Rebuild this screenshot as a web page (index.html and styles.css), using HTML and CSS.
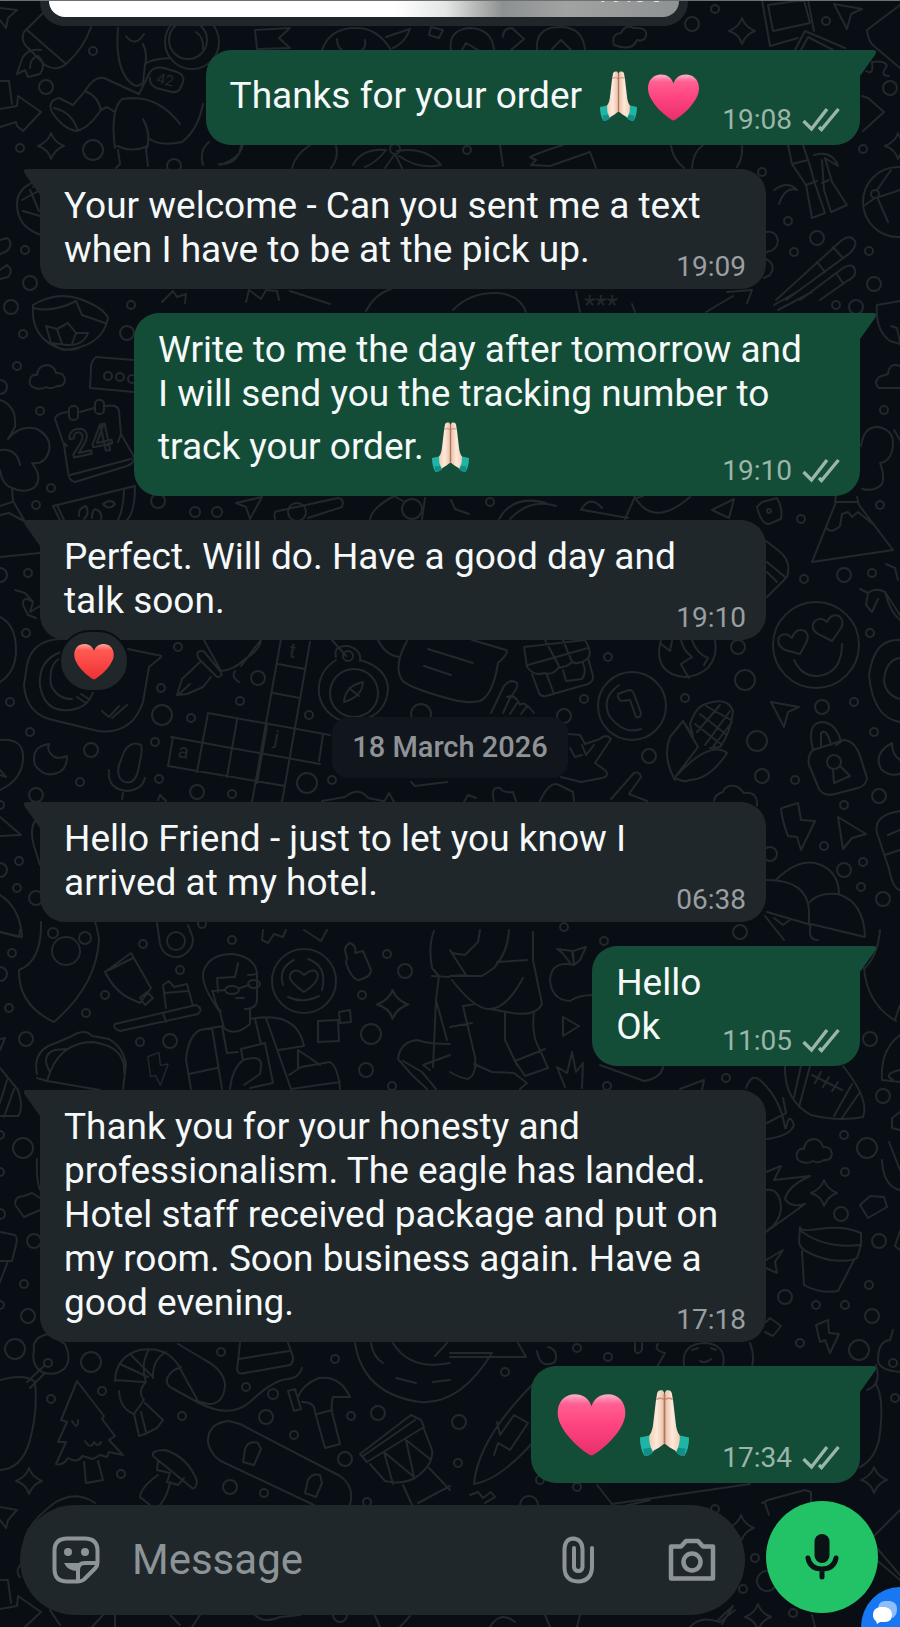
FILE: index.html
```html
<!DOCTYPE html>
<html lang="en">
<head>
    <meta charset="UTF-8">
    <meta name="viewport" content="width=device-width, initial-scale=1.0">
    <title>Chat</title>
    <link rel="stylesheet" href="styles.css">
</head>
<body>

    <!-- shared symbols -->
    <svg class="defs" width="0" height="0" aria-hidden="true">
        <defs>
            <linearGradient id="pink" x1="0" y1="0" x2="0" y2="1">
                <stop offset="0" stop-color="#ffb3c8"/>
                <stop offset="0.16" stop-color="#ff5f92"/>
                <stop offset="0.5" stop-color="#ff4480"/>
                <stop offset="1" stop-color="#e62f6c"/>
            </linearGradient>
            <linearGradient id="red" x1="0" y1="0" x2="0" y2="1">
                <stop offset="0" stop-color="#ffa299"/>
                <stop offset="0.18" stop-color="#ff5a52"/>
                <stop offset="1" stop-color="#f02f34"/>
            </linearGradient>
            <linearGradient id="skin" x1="0" y1="0" x2="1" y2="0">
                <stop offset="0" stop-color="#f3cdb4"/>
                <stop offset="0.5" stop-color="#fdeada"/>
                <stop offset="1" stop-color="#e9bda3"/>
            </linearGradient>
            <symbol id="heart" viewBox="0 0 55 62">
                <path d="M27.5 55C25 55 2 38 2 23C2 14 8 9 15 9C21 9 25.500 12 27.500 18C29.500 12 34 9 40 9C47 9 53 14 53 23C53 38 30 55 27.500 55Z"/>
            </symbol>
            <symbol id="hands" viewBox="0 0 55 62">
                <g id="hand">
                    <path fill="#1fb5a6" d="M16 40L9 41.500Q9 50 12.500 55.500Q16 56 19.500 52Z"/>
                    <path fill="#138f86" d="M11.500 50L12.500 55.500Q16 56 19.500 52L18 49Z"/>
                    <path fill="url(#skin)" d="M22 8Q22.500 6 24.500 6H26Q27.500 7 27.500 10V46Q26 47 23.500 49L18.500 52Q15.500 46 16 40Q18.500 37 19 31L21 14Z"/>
                    <path fill="none" stroke="#c98f78" stroke-width="1" d="M21.500 13Q24 11 27 13"/>
                </g>
                <use href="#hand" transform="matrix(-1 0 0 1 55 0)"/>
                <path fill="none" stroke="#b07660" stroke-width="1.300" d="M27.500 9V46"/>
            </symbol>
            <symbol id="ticks" viewBox="0 0 38 26">
                <path fill="none" stroke="currentColor" stroke-width="3.400" d="M1.500 14L9.500 22L25 2M17 20L19.500 22.500L36.500 2"/>
            </symbol>
        </defs>
    </svg>

    <!-- wallpaper -->
    <svg class="wallpaper" viewBox="0 0 900 1627" preserveAspectRatio="xMidYMid slice" aria-hidden="true">
        <defs>
            <path id="star" d="M0-13Q3-4 13 0Q4 3 0 13Q-3 3-13 0Q-3-4 0-13Z"/>
            <path id="bolt" d="M-13-20L3-26L5-8L16-10L5 20L-2 6L-9 8Z"/>
            <path id="plane" d="M-14-11L14-6L3-1L-1 14Z"/>
            <path id="cloud" d="M-12 11Q-19 9-17 2Q-15-3-10-2Q-9-11-1-12Q7-12 9-4Q17-5 18 3Q17 10 10 9Q4 13-1 10Q-6 13-12 11Z"/>
        </defs>

        <!-- rocket man, top left -->
        <path d="M0 8L17 10L8 18L6 28L0 20M43 13L24 32Q20 41 28 48L45 65Q56 72 66 64Q84 48 91 27M27 30L66 64M41 50Q25 48 21 62L17 74L25 70L28 77L40 74Q47 64 38 56Q30 58 30 68"/>
        <path d="M118 28Q115 63 127 79Q136 90 143 83L145 64Q151 59 170 58M143 44Q148 55 145 66M126 36Q135 48 144 34M85 91Q94 76 104 78L139 94L150 72Q155 66 164 68L177 72Q185 75 183 82L180 89Q177 94 168 91L156 88Q149 84 150 78M73 105Q82 95 85 91Q98 96 101 110M73 105L59 98Q47 101 52 112Q63 129 76 131Q88 129 101 110L107 107L115 112M54 108Q72 112 78 131M115 148Q110 110 122 99L133 98Q160 98 180 124M143 119Q152 135 146 150L148 166M117 146Q132 153 148 146M118 150L120 164L116 168M148 138Q160 147 182 142Q198 130 203 104"/>
        <circle cx="188" cy="40" r="19"/><circle cx="192" cy="42" r="27"/><path d="M196 32Q204 37 203 49"/>
        <text x="156" y="83" font-size="15" transform="rotate(12 156 83)">42</text>
        <path d="M0 81H9L12 104M0 109L17 106L18 96L41 112L23 131L17 126L16 122L0 127M255 30L290 28L279 38L290 48L257 49ZM322 50Q330 28 355 28Q377 27 391 50M337 39Q337 47 342 50M365 40Q366 47 362 50M386 37L410 29Q405 43 393 48M431 27L443 30L439 38L429 35Z"/>
        <path d="M451 50Q448 31 468 28Q492 28 494 50M462 50L466 43L478 50M503 37Q503 28 512 28L524 39L511 50M537 50Q535 27 560 27Q583 27 585 50M552 49L561 40L571 50M614 45Q611 34 621 33Q625 24 634 28Q648 27 646 36Q644 42 637 40Q632 52 614 45M762 0L770 46L798 38M808 0L814 31M768 5L804 0L810 23L773 31ZM795 50L805 31L845 48M801 50L808 37L833 50M867 30L900 5M867 30Q868 42 875 47L900 68M866 71Q874 76 872 62Q885 60 887 66Q879 76 889 76"/>
        <path d="M862 96L868 98L884 112L863 131M788 145L792 164L806 185L812 218L825 213L814 181L810 166L803 145M792 164L808 160M806 185L817 181M814 155Q832 150 838 166L825 158L832 182L847 205L831 212L824 190L822 160M774 190Q788 180 797 190Q785 186 779 204M822 183L829 180"/>
        <circle cx="898" cy="202" r="35"/><circle cx="875" cy="194" r="4"/><path d="M877 190L891 170M879 197L900 190M878 199L888 222M865 205L875 198"/>
        <path d="M53 177Q17 182 17 204Q17 227 41 235M30 190L39 211M22 200L40 190M23 211L40 216M33 187L40 183M203 165Q199 150 209 142M220 165Q243 157 243 142M241 145Q239 165 219 164M292 168Q295 155 310 145M336 146Q339 158 331 168M353 165Q362 148 386 150Q376 163 365 167M397 151Q425 146 441 165Q419 170 399 156M395 154L385 168M395 154L402 168M503 166L500 145M530 157Q543 151 563 145M530 157L536 160L531 165L550 166L590 152L596 168M671 146Q673 159 684 168M692 168Q693 152 703 145M742 146Q743 158 737 167"/>
        <circle cx="395" cy="149" r="5"/>
        <!-- chopsticks and the rest on the right -->
        <path d="M776 300L842 240Q850 234 855 241Q857 246 850 253L786 300M800 300L843 268Q853 262 855 270Q857 276 847 281L820 300M817 262L825 272M833 247L842 257M836 273L843 283M766 232Q776 230 778 241Q777 251 766 252M766 259Q777 265 770 275L764 278M727 292L752 290L747 303M0 240L7 238Q14 243 7 251L0 254M0 270L7 265Q14 270 8 277L0 279M162 302L173 291L177 297L186 294L185 303M246 302L249 290L261 299L266 290L277 291L279 300M290 291L330 304M366 311Q375 294 391 289M453 310Q470 292 498 293Q520 295 526 312M576 292L580 312M632 304L635 312M706 312L733 296M774 305L800 290M778 310L812 292"/>
        <text x="584" y="314" font-size="26">***</text>

        <!-- bowl, cloud, calendar -->
        <path d="M33 305Q30 340 64 350Q98 347 106 325L108 318Q104 308 80 299Q57 291 33 305ZM33 308Q53 313 76 301L82 315L105 323M46 326L57 329L68 323L76 333L88 333Q83 346 67 345L51 343ZM57 329L62 344M76 333L72 344M53 344Q64 353 79 348M134 360L96 357Q90 362 91 370L90 388L134 392"/>
        <circle cx="108" cy="376" r="4"/><circle cx="120" cy="377" r="4"/><circle cx="132" cy="379" r="4"/>
        <use href="#cloud" x="47" y="377"/>
        <path d="M55 419Q55 414 67 412M80 412L94 408M106 406Q118 404 119 411L121 434L133 455Q136 463 127 466L75 482Q69 481 68 472L64 445L55 419M64 443L67 446M121 434L118 442M70 475L131 459"/>
        <rect x="69" y="406" width="9" height="14" rx="4"/><rect x="95" y="400" width="9" height="14" rx="4"/>
        <text class="outline" x="72" y="458" font-size="38" transform="rotate(-12 72 458)">24</text>
        <path d="M0 400Q17 406 15 427L8 439Q20 424 37 429Q52 437 49 451Q45 465 32 463Q43 477 35 487Q25 494 12 488Q2 485 0 470M0 450Q17 448 20 465M12 488L13 501L24 520M0 506L12 502M0 515L9 513L24 521L36 534M0 557L40 553M53 506L135 486Q135 512 127 520M53 506L60 520M57 505L64 520M124 490Q124 507 118 520"/>
        <path d="M79 516Q78 508 86 506Q90 514 84 519M92 518Q92 511 95 509Q103 512 101 519M103 504Q111 498 115 504Q109 511 103 504M236 503L262 497L250 519L246 507ZM278 511Q273 511 275 519M278 511L338 498Q345 499 342 507L308 518M370 519Q372 508 394 496L403 501M422 519L425 498"/>
        <circle cx="297" cy="512" r="9"/><circle cx="412" cy="509" r="10"/>
        <path d="M451 500L455 509L469 514M499 519Q513 494 546 503M510 519Q530 498 556 506M583 510L628 518M625 519L634 499L643 496M634 496Q653 529 690 497M712 510L734 499L729 518ZM581 510Q590 494 602 508"/>
        <path d="M762 502L777 498Q783 508 781 519L769 524Q761 524 757 507ZM836 495L835 502L858 502M857 497L859 505L893 550L812 562L836 502M826 527Q830 535 840 526L842 514L848 512L852 517L858 512L873 524M861 446Q864 426 878 427Q897 430 892 451Q889 462 880 463Q885 476 882 484Q875 492 862 489M766 541L779 551Q792 561 787 577L767 597M767 562L785 577M767 572L777 582M860 589L868 593Q875 587 885 592L900 615M868 593L866 605L872 612L878 599M885 592Q890 612 900 620M886 564L895 568L898 580M894 430L900 440"/>
        <circle cx="769" cy="511" r="2"/>
        <path d="M877 305L900 301M877 305Q875 330 890 341L900 344M891 326L897 328L900 342M900 366Q889 362 888 374L879 377Q873 383 879 388H900"/>

        <!-- smiley, gift, coin -->
        <circle cx="816" cy="645" r="43"/>
        <path d="M794 660Q802 677 818 676Q842 673 842 644M800 654L785 650Q776 645 779 637Q785 631 792 638Q796 627 805 631Q810 636 806 643ZM832 641L818 634Q809 628 815 621Q821 616 827 622Q831 613 839 616Q845 621 841 628Z"/>
        <path d="M0 617Q16 625 16 650Q16 672 0 682M15 590L25 593L33 602L30 612L40 606M33 602Q22 595 23 605L28 615L36 618M61 639Q32 640 27 665L24 685Q26 712 49 719L98 731Q132 735 143 702L149 667L160 658Q163 655 157 655L128 649M61 652Q38 660 40 686Q45 713 70 710Q88 708 93 692M60 658Q48 665 51 685Q57 699 72 699M102 711L109 717L119 706M112 718L127 705"/>
        <path d="M77 697L86 703M81 694L89 699M204 640L210 651L221 671Q234 670 245 659Q260 650 261 640M198 652Q203 649 206 654L221 672Q223 677 217 677L200 660Q196 656 198 652M200 662L182 679L177 695L187 694L203 687L211 677M178 695L190 684M235 671Q231 678 239 682M260 641L241 666"/>
        <path d="M281 639L252 802M310 642L282 802M278 664L305 669M273 693L300 698M208 713L330 735M171 737L320 764M168 766L285 786M208 713L197 772M173 737L168 766M237 720L227 777M267 726L257 783M323 735L319 761"/>
        <text x="288" y="657" font-size="21" transform="rotate(10 288 657)">t</text><text x="273" y="744" font-size="20" transform="rotate(10 273 744)">j</text><text x="177" y="757" font-size="20" transform="rotate(10 177 757)">a</text>
        <circle cx="354" cy="693" r="24"/><path d="M344 702Q345 686 363 682Q362 697 344 702M349 688L359 696M336 660Q317 672 319 694Q322 712 340 720M360 660Q388 668 388 690Q386 711 368 718M336 657Q333 645 348 646Q362 650 360 661M332 640L346 656"/><circle cx="348" cy="656" r="5"/>
        <path d="M378 640Q386 656 400 657M407 641Q393 666 402 680Q409 688 450 699M428 649L473 663M424 666L451 675M472 640L506 650Q510 652 498 663Q493 695 480 701Q465 704 450 699"/>
        <path d="M524 647L585 640Q594 655 586 660Q578 665 572 662Q566 668 559 667Q553 676 544 673Q535 677 527 667ZM545 640L560 668M563 640L572 662M528 665L588 648M532 674L539 693Q541 697 546 696L588 684Q594 681 593 676L588 658M547 675L554 694M563 670L566 681L582 679Q587 673 583 663"/>
        <path d="M491 713L504 686Q510 678 517 683Q519 687 510 698L503 713M507 697Q516 694 520 705Q524 700 534 713M517 703L510 714M527 706L521 714"/>
        <circle cx="632" cy="706" r="34"/><path d="M619 685Q600 699 610 717Q624 735 641 729M618 694L629 690Q633 690 634 694L641 713Q641 718 636 717L630 700L621 701Q617 698 618 694"/>
        <path d="M661 640Q654 665 672 674Q690 682 708 668Q718 656 715 640M660 643L670 651L672 641M681 640Q683 650 692 657L681 664Q685 672 689 678M692 640Q697 654 708 658L704 665"/>
        <path d="M675 780Q662 757 670 737L683 721L693 736M683 721L698 747L676 776Q710 740 727 753Q710 779 690 780Q682 783 676 778M693 736L690 724Q695 709 703 705Q727 695 733 711Q731 732 720 747L710 748M695 724L722 745M700 714L727 735M706 706L731 720M697 732L720 705M705 745L730 711M712 748L732 722"/>
        <use href="#plane" x="785" y="713"/><use href="#star" x="847" y="1582"/>
        <path d="M813 750Q806 722 823 722Q837 724 841 742L836 745M821 747L821 733Q827 728 831 745M813 750L844 740Q855 741 860 756L867 778Q866 786 858 788L835 794Q824 797 819 789L809 765Q807 756 813 750"/>
        <circle cx="834" cy="762" r="7"/><path d="M833 769L834 783L850 776L840 766M892 743Q873 753 881 769Q889 777 900 774M892 743Q892 755 900 760M900 640Q874 638 869 675Q873 718 900 722M900 658Q885 660 884 682Q887 696 900 699M569 734L580 735L585 744L600 739Q606 733 611 739L595 763M595 763L606 771Q609 777 602 778L581 782L561 777M570 748L575 757L582 755M582 745L586 755L594 745M411 782L415 786L447 782M322 801L345 797Q359 786 368 798L383 801M384 802L389 793L394 802M464 802L468 795L476 798M494 801Q490 786 500 788Q502 793 513 792L516 801M540 801Q550 780 559 785L573 792L574 801M611 799L634 773Q640 771 641 777L629 794L647 801M714 801Q715 794 723 792Q726 783 738 787L744 793Q758 791 757 806"/>
        <path d="M782 808L798 803L801 820L815 821L801 850L797 837L788 836Q783 824 781 809M838 817L866 834L852 838L843 849ZM900 811Q873 815 877 833L889 869Q893 889 900 890M885 855L900 850M888 835L900 830M776 880Q796 860 815 863Q838 869 839 893M767 880Q807 880 809 910L809 925M767 912L808 924M810 902Q818 892 838 894Q864 902 865 937L811 924M765 916L784 940M774 918L783 925L790 920M811 924Q807 940 818 940"/>
        <!-- moon, mic -->
        <path d="M49 744Q30 747 35 765Q44 778 57 773Q67 770 67 756Q52 762 48 748ZM0 740Q22 738 23 755Q24 779 0 790M0 775L6 777L0 770M124 752Q131 740 141 745Q143 749 139 766Q136 785 125 782Q116 779 119 765ZM109 770Q107 789 127 791Q142 790 145 778M123 793L122 799M158 800L160 795L166 801M0 817L21 835L0 836M0 895Q20 907 22 937L0 932M39 818Q28 824 34 846L40 865"/>

        <!-- toothbrush, barista, dog -->
        <path d="M41 922Q42 961 19 970Q18 1005 54 1022Q97 985 99 939Q97 927 95 922M0 932L19 937L20 930M105 972L131 953L151 988L140 1003L131 999Q115 992 105 972M109 970L133 958M140 998L147 992L153 998L145 1005ZM115 1024L196 1005Q204 1009 198 1014L120 1031Q112 1028 115 1024M163 1013L166 1022M166 1008L163 985L169 981L174 987L187 984L193 1006M164 993L188 991M157 923L160 944Q164 958 179 957Q193 952 193 938L188 925"/>
        <circle cx="176" cy="941" r="9"/><circle cx="66" cy="951" r="14"/><circle cx="53" cy="933" r="5"/><circle cx="85" cy="938" r="6"/>
        <path d="M220 1012Q199 983 204 970Q210 954 233 954Q254 957 257 972Q257 975 248 975M217 978L235 977L238 963M217 978L218 992M257 972V1001Q256 1009 245 1009M220 1012L224 1028Q235 1037 250 1024L250 1009M212 991L225 990M240 988L249 985M236 998H244"/>
        <ellipse cx="232" cy="990" rx="7" ry="4"/><ellipse cx="254" cy="984" rx="6" ry="4"/>
        <path d="M213 992Q216 1008 221 1011M191 1089L186 1060Q188 1036 200 1030L223 1026M212 1028L222 1089M250 1019Q297 1010 304 1046L279 1050M189 1074L217 1068M222 1026L227 1053L238 1052M255 1019L261 1044M266 1018L291 1089M241 1049L265 1043L273 1083L250 1088M241 1049L243 1060Q263 1054 261 1067L260 1074L244 1085M243 1060Q232 1069 230 1089M289 1075L301 1067L330 1062Q338 1067 340 1089M291 1089L340 1082M298 1068V1050L310 1058L320 1065"/>
        <circle cx="304" cy="981" r="32"/><path d="M304 992Q288 981 290 975Q295 966 304 975Q315 966 318 975Q318 983 304 992M294 960Q278 968 283 985M308 959Q328 966 322 990M288 997Q303 1004 319 996"/>
        <path d="M347 957Q342 947 350 943Q357 946 355 953L363 951L371 970Q371 977 359 980Q352 980 346 963ZM318 1021L338 1020L339 1041L318 1042ZM339 1012L350 1010L351 1022L340 1023ZM263 930L262 940L268 943L274 934L283 937L286 930M304 930L321 941L327 930"/>
        <use href="#star" x="393" y="1004" transform="translate(-79 -100) scale(1.200 1.100)"/>
        <path d="M450 950Q460 966 466 975L450 976M434 931Q428 946 432 968L439 976L436 1000L433 1067M436 1000L447 1040M432 976L449 977M450 1044Q428 1044 417 1040Q400 1042 398 1059L412 1075L427 1089M403 1061L422 1072L436 1089M450 1055L423 1065L430 1070M480 930L478 942L465 955L452 953M509 930Q508 952 494 968L482 976H450M533 932V960L542 1004Q535 1018 507 1012L490 1009Q475 1010 452 980M497 962L527 960M490 1009Q507 1008 523 978M505 1012V1040L517 1065M534 1012Q531 1036 540 1050L548 1068L525 1076L515 1061L545 1049M463 1006L475 1057Q477 1075 468 1079Q460 1078 450 1072M463 1006L475 1004M450 1027L472 1023M474 1064L492 1072L514 1073L527 1083L520 1089"/>
        <path d="M570 963Q561 950 557 949L572 951L574 965L573 951L586 947L580 960L574 965Q552 960 550 979Q551 1000 570 1001Q578 995 594 995M563 1017L579 1026L563 1036ZM565 1087L557 1067L567 1073L572 1052L576 1072L583 1063L582 1088M600 1065L644 1081Q661 1078 663 1067M680 1089L704 1080L702 1090M746 1088Q752 1071 762 1082Q781 1100 785 1128M767 1123L786 1113L783 1098M786 1128Q789 1111 794 1125Q790 1136 767 1139"/>
        <path d="M785 1066Q784 1100 811 1115Q839 1122 863 1117Q870 1100 843 1066M801 1066L794 1097M810 1066L799 1107M852 1084L834 1116M860 1092L842 1118M812 1075L842 1090M815 1083L821 1072M823 1087L829 1077M832 1091L838 1082M864 968Q867 1004 896 1021M880 930Q878 955 865 968M900 1035Q880 1050 882 1080L900 1082M893 1080Q882 1074 900 1070M895 1020L900 1005"/>
        <path d="M37 1074Q32 1050 56 1043L72 1036Q85 1028 92 1036L109 1039Q123 1047 126 1064L123 1089M37 1078L47 1081Q58 1042 93 1042Q126 1047 124 1072M47 1081L100 1090M50 1072Q40 1055 55 1050L66 1049M0 1039L5 1038L0 1050M0 1068L18 1090Q24 1109 18 1116L0 1116M0 1103L7 1080M4 1117L14 1089M15 1204Q15 1196 24 1196L32 1193L40 1198M16 1206L24 1217L40 1210M0 1232L15 1235Q18 1237 16 1245L12 1261H0M8 1261L0 1282M37 1159Q36 1180 40 1190"/>
        <use href="#cloud" x="814" y="1151"/><use href="#star" x="824" y="1193"/>
        <path d="M766 1172L781 1166L774 1180L810 1176Q788 1186 785 1199Q790 1208 805 1204L766 1232M766 1190Q780 1188 781 1208Q780 1222 768 1230M766 1260L783 1250L775 1262L777 1273L766 1268M860 1205L870 1196L884 1197L887 1207L868 1218ZM800 1227L799 1243Q801 1253 830 1260Q851 1262 857 1258L861 1245V1233Q843 1225 819 1229Q800 1232 800 1227M801 1231Q825 1249 860 1245M802 1251L804 1285Q820 1294 838 1291L854 1260M900 1112L892 1118L892 1128L900 1130M889 1142L900 1170M882 1160Q883 1186 900 1190M900 1231L895 1246L900 1250"/>
        <path d="M766 1322L770 1318L781 1326L773 1336L765 1332M816 1325L828 1320L829 1333L839 1334L830 1353L825 1340L820 1342ZM893 1330L890 1340Q878 1341 878 1360Q878 1370 900 1372"/>

        <!-- bottom strip -->
        <path d="M0 1380Q25 1373 35 1382Q38 1410 30 1440Q22 1469 0 1470M30 1388L45 1373M27 1382L45 1365M34 1350Q32 1337 49 1334L65 1344Q72 1359 65 1368Q55 1377 42 1372Q31 1366 34 1350M77 1381L61 1420L67 1422L58 1442H66L56 1464Q63 1466 68 1458Q78 1464 82 1456L93 1459L100 1455L107 1457L109 1452L123 1455L109 1440L115 1436L102 1419L104 1416ZM77 1381L104 1416M84 1462L86 1483L103 1480L98 1461M72 1421Q78 1431 78 1420M85 1441Q91 1450 94 1442Q98 1448 101 1442"/>
        <path d="M115 1381Q116 1356 140 1350Q170 1345 182 1372L199 1403L170 1387Q162 1380 174 1370L181 1367M119 1391Q120 1409 134 1414L144 1400Q137 1392 145 1383M115 1380L144 1382M120 1364L148 1377M130 1354L152 1376M149 1349Q140 1365 146 1382M166 1352Q152 1360 153 1378M134 1414L139 1436L145 1434L157 1428L163 1420L145 1403M141 1412L146 1432M178 1344L205 1360Q225 1371 225 1386Q223 1405 208 1404L197 1401M240 1343L237 1370Q239 1375 245 1373L290 1365Q295 1361 292 1354L288 1343M239 1359L289 1351M199 1403Q230 1419 250 1402Q273 1380 288 1379Q299 1378 302 1368"/>
        <path d="M153 1456Q151 1450 165 1450Q188 1457 197 1481Q196 1490 192 1488L153 1456M158 1460L157 1470L170 1473L167 1482L178 1485L184 1478M170 1482Q168 1495 160 1505M140 1497Q141 1487 158 1475M140 1497L150 1505"/>
        <path d="M208 1443Q207 1423 229 1421L240 1424L340 1476Q355 1486 350 1505M208 1443Q212 1458 225 1463L314 1505M245 1449Q248 1440 258 1443L261 1449L254 1465L243 1462ZM308 1480Q312 1473 320 1475L322 1483L316 1497L305 1493ZM288 1391L295 1389L301 1409L294 1411ZM298 1397Q303 1384 319 1378Q340 1375 350 1397L333 1397Q331 1403 332 1412L340 1444L325 1448L315 1412Q315 1402 302 1402M317 1414L332 1410M360 1454L411 1415L421 1420L424 1427L367 1462ZM363 1456L415 1420M370 1464L385 1481Q401 1485 415 1478Q434 1465 432 1450L424 1429M384 1452L393 1484M384 1452L414 1477L406 1440L430 1459M403 1485L412 1505M429 1468L450 1490M418 1503L450 1486"/>
        <path d="M355 1343Q363 1394 420 1402Q460 1405 492 1353H450M371 1343Q373 1357 383 1363M393 1343Q410 1371 450 1363M396 1378L416 1383M433 1382L450 1380M435 1356L447 1343M518 1343L526 1357H450M474 1484Q478 1438 537 1380M474 1484Q500 1480 535 1440M497 1422L500 1435L514 1415L528 1423L510 1450L498 1443L494 1455M537 1351Q540 1370 555 1362Q559 1350 548 1347M658 1344Q653 1350 665 1353L657 1367M684 1366Q681 1343 706 1343Q727 1345 723 1366M750 1343Q755 1355 752 1367M635 1343V1351Q638 1356 642 1350V1343M692 1350L698 1348M711 1348L716 1350M700 1361Q706 1364 711 1359"/>
        <path d="M597 1485L612 1504L750 1484M616 1508L650 1500M762 1503L768 1500L805 1490L811 1492V1503M765 1503L769 1515M470 1495L478 1492L483 1498L491 1492L495 1497L485 1503M876 1384Q885 1400 879 1440Q874 1460 860 1467M867 1390Q882 1385 876 1365M900 1510L870 1540L900 1575M865 1550L900 1580M24 1543Q26 1525 53 1504Q75 1489 95 1503M0 1507L17 1510L8 1520L6 1528L0 1520M20 1565Q15 1572 20 1577M0 1580H8L11 1603M0 1609L17 1606L18 1596L41 1612L25 1627M50 1610L60 1625M103 1615L92 1627M115 1615V1627M170 1615L180 1625M200 1615L192 1627M255 1615Q264 1624 280 1617L300 1615M375 1616L380 1627M410 1616L400 1627M490 1627Q500 1610 515 1622M545 1615L550 1627M580 1615L577 1627M690 1627Q700 1615 720 1622L735 1610M722 1624L733 1606L718 1620M812 1615L815 1627"/>
        <use href="#star" x="29" y="1481"/><use href="#star" x="874" y="1480"/><use href="#star" x="741" y="1528"/><use href="#star" x="758" y="1617"/><use href="#star" x="51" y="146"/><use href="#star" x="742" y="31"/><use href="#star" x="898" y="146"/>
        <use href="#bolt" x="157" y="1071" transform="translate(47 300) scale(.7 .72)"/>
        <use href="#plane" x="848" y="15"/>

        <!-- bubbles -->
        <g>
            <circle cx="46" cy="87" r="7"/><circle cx="93" cy="51" r="4"/><circle cx="93" cy="150" r="10"/><circle cx="20" cy="148" r="4"/><circle cx="25" cy="250" r="4"/><circle cx="30" cy="283" r="7"/><circle cx="174" cy="166" r="7"/><circle cx="467" cy="150" r="4"/><circle cx="692" cy="24" r="7"/><circle cx="715" cy="9" r="4"/><circle cx="826" cy="21" r="4"/><circle cx="890" cy="88" r="7"/><circle cx="863" cy="149" r="4"/><circle cx="762" cy="172" r="4"/><circle cx="788" cy="221" r="4"/><circle cx="817" cy="238" r="7"/><circle cx="794" cy="252" r="4"/><circle cx="869" cy="251" r="4"/><circle cx="874" cy="284" r="7"/><circle cx="11" cy="307" r="7"/><circle cx="131" cy="305" r="4"/><circle cx="23" cy="334" r="4"/><circle cx="127" cy="333" r="7"/><circle cx="17" cy="366" r="4"/><circle cx="0" cy="387" r="7"/><circle cx="40" cy="411" r="4"/><circle cx="51" cy="488" r="4"/><circle cx="36" cy="505" r="4"/><circle cx="158" cy="501" r="7"/><circle cx="195" cy="512" r="5"/><circle cx="217" cy="512" r="5"/><circle cx="0" cy="575" r="7"/><circle cx="28" cy="573" r="4"/><circle cx="26" cy="633" r="4"/>
            <circle cx="836" cy="305" r="4"/><circle cx="856" cy="307" r="7"/><circle cx="884" cy="410" r="4"/><circle cx="490" cy="502" r="4"/><circle cx="801" cy="519" r="4"/><circle cx="880" cy="505" r="4"/><circle cx="844" cy="575" r="7"/><circle cx="872" cy="573" r="4"/><circle cx="804" cy="579" r="4"/><circle cx="870" cy="633" r="4"/><circle cx="738" cy="647" r="7"/><circle cx="608" cy="657" r="4"/><circle cx="745" cy="680" r="10"/><circle cx="178" cy="647" r="4"/><circle cx="258" cy="678" r="7"/><circle cx="161" cy="688" r="4"/><circle cx="162" cy="715" r="10"/><circle cx="191" cy="718" r="4"/><circle cx="240" cy="701" r="4"/><circle cx="10" cy="702" r="4"/><circle cx="30" cy="732" r="4"/><circle cx="91" cy="750" r="7"/><circle cx="155" cy="742" r="4"/><circle cx="80" cy="782" r="4"/><circle cx="159" cy="779" r="4"/><circle cx="36" cy="795" r="7"/><circle cx="197" cy="792" r="7"/><circle cx="232" cy="794" r="4"/><circle cx="307" cy="783" r="10"/><circle cx="332" cy="780" r="4"/><circle cx="309" cy="715" r="4"/><circle cx="421" cy="714" r="10"/><circle cx="584" cy="699" r="4"/><circle cx="685" cy="698" r="4"/><circle cx="564" cy="716" r="7"/><circle cx="649" cy="756" r="7"/><circle cx="757" cy="741" r="10"/><circle cx="762" cy="776" r="7"/><circle cx="822" cy="707" r="7"/><circle cx="854" cy="702" r="4"/><circle cx="874" cy="732" r="4"/><circle cx="795" cy="780" r="4"/><circle cx="879" cy="796" r="7"/><circle cx="844" cy="805" r="4"/><circle cx="824" cy="846" r="4"/><circle cx="863" cy="862" r="4"/><circle cx="844" cy="870" r="7"/><circle cx="861" cy="887" r="4"/><circle cx="883" cy="899" r="7"/><circle cx="770" cy="854" r="7"/><circle cx="740" cy="932" r="7"/><circle cx="564" cy="927" r="4"/>
            <circle cx="0" cy="805" r="4"/><circle cx="19" cy="861" r="4"/><circle cx="0" cy="870" r="7"/><circle cx="17" cy="888" r="4"/><circle cx="36" cy="898" r="7"/><circle cx="202" cy="924" r="4"/><circle cx="12" cy="953" r="4"/><circle cx="0" cy="974" r="7"/><circle cx="143" cy="944" r="4"/><circle cx="232" cy="940" r="4"/><circle cx="180" cy="970" r="4"/><circle cx="105" cy="995" r="4"/><circle cx="86" cy="1013" r="4"/><circle cx="9" cy="1008" r="4"/><circle cx="26" cy="1039" r="7"/><circle cx="140" cy="1042" r="4"/><circle cx="170" cy="1041" r="7"/><circle cx="387" cy="954" r="4"/><circle cx="405" cy="971" r="7"/><circle cx="362" cy="995" r="4"/><circle cx="371" cy="1034" r="10"/><circle cx="366" cy="1070" r="7"/><circle cx="392" cy="1086" r="4"/><circle cx="604" cy="941" r="4"/><circle cx="607" cy="1086" r="4"/><circle cx="726" cy="1078" r="4"/><circle cx="870" cy="1039" r="7"/><circle cx="883" cy="1096" r="7"/><circle cx="844" cy="1135" r="4"/><circle cx="867" cy="1148" r="10"/><circle cx="845" cy="1172" r="4"/><circle cx="841" cy="1214" r="7"/><circle cx="879" cy="1241" r="7"/><circle cx="869" cy="1285" r="4"/><circle cx="785" cy="1297" r="7"/><circle cx="816" cy="1305" r="4"/><circle cx="845" cy="1305" r="4"/><circle cx="872" cy="1316" r="7"/><circle cx="23" cy="1148" r="10"/><circle cx="0" cy="1135" r="4"/><circle cx="0" cy="1172" r="4"/><circle cx="0" cy="1214" r="5"/><circle cx="34" cy="1241" r="7"/><circle cx="24" cy="1284" r="4"/><circle cx="28" cy="1316" r="7"/><circle cx="0" cy="1305" r="4"/>
            <circle cx="15" cy="1349" r="10"/><circle cx="91" cy="1362" r="10"/><circle cx="51" cy="1399" r="4"/><circle cx="102" cy="1391" r="4"/><circle cx="221" cy="1352" r="4"/><circle cx="246" cy="1387" r="4"/><circle cx="273" cy="1394" r="5"/><circle cx="182" cy="1416" r="4"/><circle cx="266" cy="1417" r="7"/><circle cx="294" cy="1435" r="4"/><circle cx="335" cy="1359" r="4"/><circle cx="351" cy="1416" r="4"/><circle cx="378" cy="1413" r="7"/><circle cx="345" cy="1459" r="7"/><circle cx="230" cy="1487" r="7"/><circle cx="264" cy="1493" r="4"/><circle cx="121" cy="1474" r="4"/><circle cx="48" cy="1363" r="4"/><circle cx="367" cy="1502" r="4"/><circle cx="577" cy="1348" r="4"/><circle cx="608" cy="1357" r="4"/><circle cx="505" cy="1372" r="4"/><circle cx="459" cy="1422" r="7"/><circle cx="458" cy="1463" r="4"/><circle cx="540" cy="1480" r="4"/><circle cx="577" cy="1487" r="4"/><circle cx="529" cy="1505" r="9"/><circle cx="800" cy="1343" r="4"/><circle cx="859" cy="1350" r="10"/><circle cx="893" cy="1363" r="4"/><circle cx="895" cy="1398" r="4"/><circle cx="755" cy="1558" r="4"/><circle cx="743" cy="1589" r="4"/><circle cx="767" cy="1581" r="10"/><circle cx="793" cy="1613" r="4"/><circle cx="715" cy="1509" r="4"/><circle cx="340" cy="1615" r="7"/>
        </g>
    </svg>

    <main class="chat">
        <div class="media">
            <div class="photo"><span>19:06</span></div>
        </div>

        <div class="bubble sent">
            <p>Thanks for your order <svg class="emoji" role="img" aria-label="folded hands"><use href="#hands"/></svg><svg class="emoji pink" role="img" aria-label="pink heart"><use href="#heart"/></svg></p>
            <span class="meta">19:08 <svg class="ticks"><use href="#ticks"/></svg></span>
        </div>

        <div class="bubble received long">
            <p>Your welcome - Can you sent me a text when I have to be at the pick up.</p>
            <span class="meta">19:09</span>
        </div>

        <div class="bubble sent long">
            <p>Write to me the day after tomorrow and I will send you the tracking number to track your order. <svg class="emoji tight" role="img" aria-label="folded hands"><use href="#hands"/></svg></p>
            <span class="meta">19:10 <svg class="ticks"><use href="#ticks"/></svg></span>
        </div>

        <div class="bubble received long">
            <p>Perfect. Will do. Have a good day and talk soon.</p>
            <span class="meta">19:10</span>
            <button class="reaction" type="button" aria-label="Heart reaction"><svg><use href="#heart"/></svg></button>
        </div>

        <div class="date">18 March 2026</div>

        <div class="bubble received long">
            <p>Hello Friend - just to let you know I arrived at my hotel.</p>
            <span class="meta">06:38</span>
        </div>

        <div class="bubble sent">
            <p>Hello<br>Ok</p>
            <span class="meta">11:05 <svg class="ticks"><use href="#ticks"/></svg></span>
        </div>

        <div class="bubble received long">
            <p>Thank you for your honesty and professionalism. The eagle has landed. Hotel staff received package and put on my room. Soon business again. Have a good evening.</p>
            <span class="meta">17:18</span>
        </div>

        <div class="bubble sent">
            <p class="big"><svg class="emoji pink" role="img" aria-label="pink heart"><use href="#heart"/></svg><svg class="emoji" role="img" aria-label="folded hands"><use href="#hands"/></svg></p>
            <span class="meta">17:34 <svg class="ticks"><use href="#ticks"/></svg></span>
        </div>
    </main>

    <form class="composer">
        <div class="field">
            <button type="button" aria-label="Stickers">
                <svg viewBox="0 0 48 48" fill="none" stroke="currentColor" stroke-width="4">
                    <path d="M15 2.500H33Q45.500 2.500 45.500 15V27Q45.500 30 43 32.500L32 43.500Q29.500 45.500 26 45.500H15Q2.500 45.500 2.500 33V15Q2.500 2.500 15 2.500Z"/>
                    <path d="M26 45V34Q26 27 33 27H45"/>
                    <g fill="currentColor" stroke="none"><circle cx="16" cy="16" r="4"/><circle cx="33" cy="16" r="4"/><path d="M12 27H33Q27 29 25.500 35Q16 35 12 27Z"/></g>
                </svg>
            </button>
            <input type="text" placeholder="Message" aria-label="Message">
            <button type="button" aria-label="Attach">
                <svg viewBox="0 0 48 48" fill="none" stroke="currentColor" stroke-width="4" stroke-linecap="round">
                    <path d="M38 12V32Q37 45 24 45.500Q11 45 10.500 32V13Q11 3 19 2.500Q28 3 28.500 13V31Q28 35 24.500 35Q20.500 35 20 31V12"/>
                </svg>
            </button>
            <button type="button" aria-label="Camera">
                <svg viewBox="0 0 48 48" fill="none" stroke="currentColor" stroke-width="4.500" stroke-linejoin="round">
                    <path d="M3 10.500H13L18 5H30L35 10.500H45V42.500H3Z"/>
                    <circle cx="24" cy="26" r="8.500"/>
                </svg>
            </button>
        </div>
        <button class="mic" type="button" aria-label="Record voice message">
            <svg viewBox="0 0 48 48" fill="none" stroke="currentColor" stroke-width="5" stroke-linecap="round">
                <rect x="16.500" y="1" width="15" height="29" rx="7.500" fill="currentColor" stroke="none"/>
                <path d="M10 25Q12 36 24 36Q36 36 38 25M24 37V44"/>
            </svg>
        </button>
    </form>

    <button class="help" type="button" aria-label="Open chats">
        <svg viewBox="0 0 26 26">
            <path fill="#8fbcfa" d="M6 8Q7 1 13 1H18Q25 2 25 9Q25 15 21 18L12 12Z"/>
            <path fill="#fff" d="M8 7H13Q20 8 20 15Q20 22 13 22H8L5 24L4 21Q1 19 1 15Q1 8 8 7Z"/>
        </svg>
    </button>

</body>
</html>
```
FILE: styles.css
```css
* {
    box-sizing: border-box;
}

body {
    font-family: Roboto, sans-serif;
    background: #090e15;
    color: #f5f9fa;
    margin: 0;
    min-height: 100vh;
    display: flex;
    flex-direction: column;
    position: relative;
    border-top: 1px solid #6d7073;
}

p {
    margin: 0;
}

button, input {
    font: inherit;
    color: inherit;
    background: none;
    border: none;
    padding: 0;
}

button {
    cursor: pointer;
}

.defs {
    position: absolute;
}

.wallpaper {
    position: absolute;
    top: -1px;
    left: 0;
    width: 100%;
    height: 100vh;
    z-index: -1;
    fill: none;
    stroke: #22282c;
    stroke-width: 2;
    stroke-linejoin: round;
    stroke-linecap: round;
}

.wallpaper text {
    fill: #22282c;
    stroke: none;
}

.wallpaper .outline {
    fill: none;
    stroke: #22282c;
    font-weight: 500;
}

.chat {
    flex: 1;
    display: flex;
    flex-direction: column;
    align-items: flex-start;
    gap: 24px;
    padding: 0 40px;
}

/* bottom of the photo message */
.media {
    width: 79%;
    background: #20272a;
    padding: 0 9px 9px;
    border-radius: 0 0 24px 24px;
}

.photo {
    height: 16px;
    display: flex;
    justify-content: flex-end;
    align-items: flex-end;
    padding: 0 15px 14px;
    overflow: hidden;
    border-radius: 0 0 17px 17px;
    background: linear-gradient(90deg, #fff 55%, #e4e5e5 63%, #8e9191 72%, #a1a3a3 82%, #8f9292);
    font-size: 28px;
    line-height: 20px;
    color: #e8e8e8;
}

.bubble {
    position: relative;
    display: flex;
    align-items: flex-end;
    gap: 21px;
    max-width: 726px;
    padding: 15px 20px 17px 24px;
    border-radius: 25px;
    font-size: 37px;
    line-height: 44px;
}

.bubble::before {
    content: '';
    position: absolute;
    top: 0;
    width: 17px;
    height: 26px;
    background: inherit;
}

.received {
    background: #20272a;
    border-top-left-radius: 0;
}

.received::before {
    right: 100%;
    clip-path: path('M17 0H4Q-1 0 2 5L17 26Z');
}

.sent {
    background: #144d37;
    align-self: flex-end;
    border-top-right-radius: 0;
}

.sent::before {
    left: 100%;
    clip-path: path('M0 0H13Q18 0 15 5L0 26Z');
}

/* the time shares the last line of the text */
.long {
    display: grid;
}

.long p,
.long .meta {
    grid-area: 1 / 1;
}

.long p {
    padding-right: 24px;
}

.long .meta {
    justify-self: end;
}

.meta {
    display: flex;
    align-items: center;
    gap: 10px;
    margin-bottom: -11px;
    font-size: 28px;
    line-height: 32px;
    color: #9a9fa2;
}

.sent .meta {
    margin-bottom: -8px;
    color: #9ab5a9;
}

.ticks {
    width: 38px;
    height: 26px;
}

.emoji {
    width: 55px;
    height: 63px;
    vertical-align: -20px;
}

.pink {
    fill: url(#pink);
}

.tight {
    margin-left: -10px;
}

.big {
    display: flex;
}

.big .emoji {
    width: 73px;
    height: 85px;
}

.reaction {
    position: absolute;
    left: 19px;
    bottom: -52px;
    width: 70px;
    height: 62px;
    display: flex;
    align-items: center;
    justify-content: center;
    border: 2px solid #090e15;
    border-radius: 31px;
    background: #20272a;
}

.reaction svg {
    width: 44px;
    height: 48px;
    fill: url(#red);
}

.date {
    align-self: center;
    margin-top: 53px;
    padding: 14px 20px;
    border-radius: 16px;
    background: #11161d;
    color: #8f9396;
    font-size: 29px;
    font-weight: 500;
    line-height: 33px;
}

.composer {
    display: flex;
    align-items: flex-start;
    gap: 21px;
    padding: 16px 22px 12px 20px;
}

.field {
    flex: 1;
    min-width: 0;
    height: 110px;
    display: flex;
    align-items: center;
    margin-top: 4px;
    padding: 0 29px 0 32px;
    border-radius: 55px;
    background: #20272a;
    color: #8d9498;
}

.field button,
.field svg {
    display: block;
    width: 48px;
    height: 48px;
}

.field input {
    flex: 1;
    min-width: 0;
    margin: 0 32px;
    font-size: 42px;
    line-height: 50px;
    outline: none;
}

.field input::placeholder {
    color: #8d9498;
    opacity: 1;
}

.field input ~ button + button {
    margin-left: 66px;
}

.mic {
    width: 112px;
    height: 112px;
    display: flex;
    align-items: center;
    justify-content: center;
    border-radius: 50%;
    background: #22c366;
    color: #0b1216;
}

.mic svg {
    width: 48px;
    height: 48px;
}

/* launcher in the corner */
.help {
    position: absolute;
    right: 0;
    bottom: 0;
    width: 39px;
    height: 40px;
    padding: 11px 0 0 11px;
    border-top-left-radius: 100%;
    background: #1878f3;
}

.help svg {
    display: block;
    width: 26px;
    height: 26px;
}
```
